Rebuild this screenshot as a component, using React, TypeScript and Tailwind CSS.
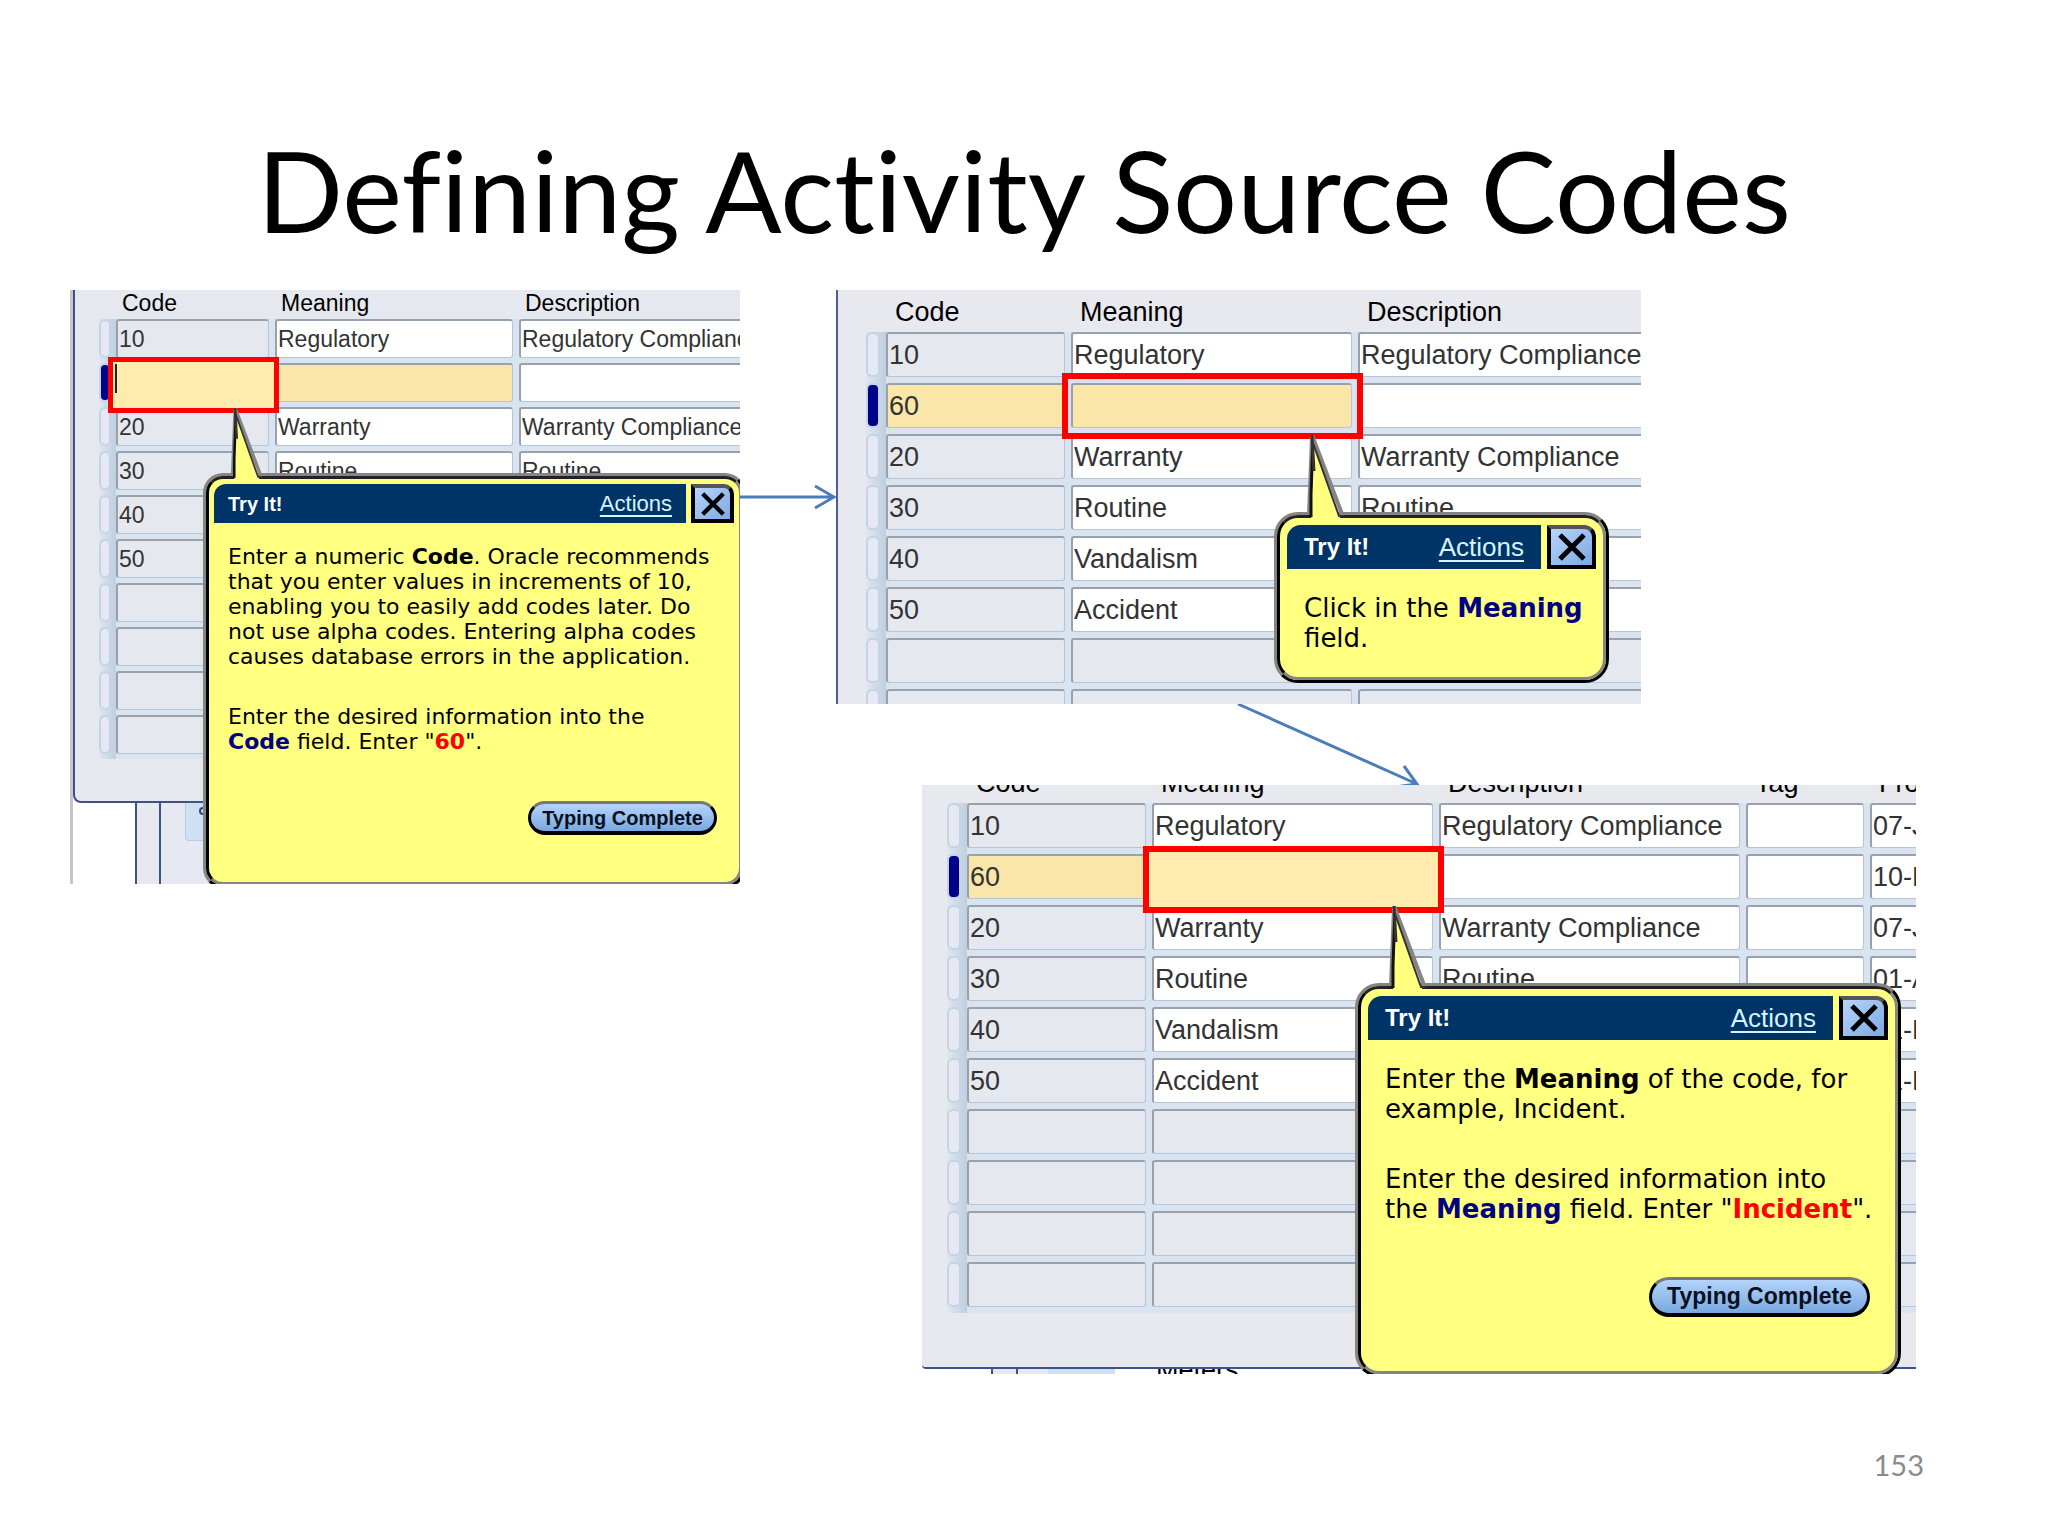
import type { ReactNode } from "react";
import clsx from "clsx";

type Size = "sm" | "lg";

interface Column {
  label: string;
  width: string;
}

interface Row {
  values: string[];
  current?: boolean;
}

interface FormGridProps {
  size: Size;
  columns: Column[];
  rows: Row[];
  className?: string;
}

const gridStyles = {
  sm: {
    marker: "w-[17px]",
    markerBox: "h-[39px] w-3",
    head: "h-[29px] pb-1 pl-[6px] text-[23px]",
    cell: "pb-[5px] pr-[6px]",
    input: "h-[39px] text-[23px]",
  },
  lg: {
    marker: "w-5",
    markerBox: "h-[45px] w-[14px]",
    head: "h-[42px] pb-1.5 pl-[9px] text-[27px]",
    cell: "pb-[6px] pr-[6px]",
    input: "h-[45px] text-[27px]",
  },
};

const smallColumns: Column[] = [
  { label: "Code", width: "w-[159px]" },
  { label: "Meaning", width: "w-[244px]" },
  { label: "Description", width: "w-[264px]" },
];

const largeColumns: Column[] = [
  { label: "Code", width: "w-[185px]" },
  { label: "Meaning", width: "w-[287px]" },
  { label: "Description", width: "w-[307px]" },
];

const wideColumns: Column[] = [
  ...largeColumns,
  { label: "Tag", width: "w-[124px]" },
  { label: "From", width: "w-[160px]" },
];

const codes = [
  ["10", "Regulatory", "Regulatory Compliance"],
  ["20", "Warranty", "Warranty Compliance"],
  ["30", "Routine", "Routine"],
  ["40", "Vandalism", "Vandalism"],
  ["50", "Accident", "Accident"],
];

function buildRows(newCode: string, total: number, dates: string[] = []): Row[] {
  const filled: Row[] = codes.map((values) => ({ values }));
  filled.splice(1, 0, { values: [newCode, "", ""], current: true });
  const rows = filled.map((row, i) =>
    dates.length > 0 ? { ...row, values: [...row.values, "", dates[i]] } : row
  );
  while (rows.length < total) rows.push({ values: [] });
  return rows;
}

const firstRows = buildRows("", 10);
const secondRows = buildRows("60", 8);
const thirdRows = buildRows("60", 10, ["07-J", "10-M", "07-J", "01-A", "01-M", "01-M"]);

function FormGrid({ size, columns, rows, className }: FormGridProps) {
  const s = gridStyles[size];

  function fieldColor(row: Row, col: number) {
    if (row.current && col < 2) return "bg-[#fae6a8]";
    if (row.values.length === 0 || col === 0) return "bg-[#e6e8ef]";
    return "bg-white";
  }

  return (
    <table className={clsx("w-0 table-fixed border-collapse", className)}>
      <thead>
        <tr>
          <th className={clsx("p-0", s.marker)} aria-label="Current record" />
          {columns.map((col) => (
            <th
              key={col.label}
              scope="col"
              className={clsx("whitespace-nowrap text-left align-bottom font-normal leading-none text-black", s.head, col.width)}
            >
              {col.label}
            </th>
          ))}
        </tr>
      </thead>
      <tbody>
        {rows.map((row, i) => (
          <tr key={i}>
            <td className="bg-gradient-to-r from-[#dfe7f1] to-[#bfcede] p-0 align-top">
              <div
                className={clsx(
                  "rounded-md border-2 border-[#c3d4e3]",
                  s.markerBox,
                  row.current ? "bg-[#00008b]" : "bg-[#e6e9f3]"
                )}
              />
            </td>
            {columns.map((col, c) => (
              <td key={col.label} className={clsx("bg-[#dae4f0] align-top", s.cell)}>
                <input
                  type="text"
                  aria-label={`${col.label}, row ${i + 1}`}
                  defaultValue={row.values[c] ?? ""}
                  className={clsx(
                    "block w-full rounded-[3px] border-l-2 border-t-2 border-b border-r border-b-[#b5c6d8] border-r-[#b5c6d8] border-l-[#98a2ae] border-t-[#98a2ae] p-0 pl-px text-[#333333] outline-none",
                    s.input,
                    fieldColor(row, c)
                  )}
                />
              </td>
            ))}
          </tr>
        ))}
      </tbody>
    </table>
  );
}

interface CalloutProps {
  size: Size;
  className: string;
  tail: string;
  action?: string;
  children: ReactNode;
}

const calloutStyles = {
  sm: {
    frame: "rounded-[20px]",
    inner: "rounded-[17px] p-[5px]",
    bar: "h-[39px] rounded-tl-[12px] px-[14px]",
    title: "text-[20px]",
    link: "text-[22px]",
    gap: "gap-[5px]",
    close: "h-[39px] w-[43px] rounded-tr-[10px]",
    icon: "h-6 w-6",
    body: "gap-[35px] px-[14px] pt-[21px] text-[22px] leading-[25px]",
    footer: "px-[17px] pb-[42px]",
    button: "h-[34px] w-[189px] text-[20px]",
  },
  lg: {
    frame: "rounded-[24px]",
    inner: "rounded-[21px] p-[7px]",
    bar: "h-[44px] rounded-tl-[14px] px-[17px]",
    title: "text-[24px]",
    link: "text-[26px]",
    gap: "gap-[6px]",
    close: "h-[44px] w-[49px] rounded-tr-[12px]",
    icon: "h-7 w-7",
    body: "gap-[40px] px-[17px] pt-[24px] text-[26px] leading-[30px]",
    footer: "px-[18px] pb-[47px]",
    button: "h-[40px] w-[221px] text-[23px]",
  },
};

function Callout({ size, className, tail, action, children }: CalloutProps) {
  const s = calloutStyles[size];
  return (
    <aside
      className={clsx(
        "absolute flex border-[3px] border-b-black border-l-[#858585] border-r-black border-t-[#858585] bg-[#ffff80]",
        s.frame,
        className
      )}
    >
      <div
        className={clsx(
          "flex w-full flex-col border-[3px] border-b-[#858585] border-l-black border-r-[#858585] border-t-[#222222]",
          s.inner
        )}
      >
        <header className={clsx("flex", s.gap)}>
          <div className={clsx("flex flex-1 items-center justify-between bg-[#003366] text-white", s.bar)}>
            <h2 className={clsx("font-bold", s.title)}>Try It!</h2>
            <a href="#actions" className={clsx("text-[#d4f4ff] underline decoration-2 underline-offset-4", s.link)}>
              Actions
            </a>
          </div>
          <button
            type="button"
            aria-label="Close"
            className={clsx(
              "flex items-center justify-center border-4 border-black border-t-[#555555] bg-gradient-to-br from-[#b8d4fb] to-[#7ba9e2]",
              s.close
            )}
          >
            <svg viewBox="0 0 28 28" className={clsx("shrink-0", s.icon)} fill="none" stroke="black" strokeWidth="5">
              <path d="M2 2 L26 26 M26 2 L2 26" />
            </svg>
          </button>
        </header>
        <div className={clsx("flex flex-1 flex-col whitespace-nowrap font-['DejaVu_Sans',sans-serif] text-black", s.body)}>
          {children}
        </div>
        {action && (
          <footer className={clsx("flex justify-end", s.footer)}>
            <button
              type="button"
              className={clsx(
                "rounded-full border-[3px] border-b-4 border-black border-t-[#777777] bg-gradient-to-b from-[#b4d4fb] to-[#78a8e0] font-bold leading-none text-[#0a1020]",
                s.button
              )}
            >
              {action}
            </button>
          </footer>
        )}
      </div>
      <svg viewBox="0 0 40 88" className={clsx("absolute", tail)} fill="none" aria-hidden="true">
        <path d="M7 4 L5 88 L36 88 L33 80 Z" fill="#ffff80" />
        <path d="M6 2 L3 80" stroke="#858585" strokeWidth="4" />
        <path d="M7 3 L5 60 L5 82" stroke="#111" strokeWidth="3" />
        <path d="M6 0 L36 79" stroke="#858585" strokeWidth="4" />
        <path d="M7 8 L33 81 L38 81" stroke="#333" strokeWidth="2" />
        <path d="M6 0 L8 36" stroke="#333" strokeWidth="3" />
      </svg>
    </aside>
  );
}

function Term({ children }: { children: ReactNode }) {
  return <b className="text-[#000080]">{children}</b>;
}

function Typed({ children }: { children: ReactNode }) {
  return <b className="text-[#ff0000]">{children}</b>;
}

export default function App() {
  return (
    <main className="min-h-screen overflow-hidden bg-white font-['Liberation_Sans',Arial,sans-serif]">
      <h1 className="pb-10 pt-32 text-center font-['Lato',sans-serif] text-[113px] leading-[122px] text-black [font-variant-ligatures:none]">
        Defining Activity Source Codes
      </h1>

      <div className="grid grid-cols-[minmax(0,670fr)_96px_minmax(0,1080fr)] items-start pl-[70px] pr-[132px]">
        {/* Step 1: enter the code */}
        <section className="relative h-[594px] overflow-hidden border-l-[3px] border-[#c6c6c6]">
          <div className="h-[513px] rounded-bl-lg border-b-2 border-l-2 border-[#3b5488] bg-[#e6e8ef]">
            <FormGrid size="sm" columns={smallColumns} rows={firstRows} className="ml-[24px]" />
          </div>
          <div className="ml-[62px] flex h-[81px] border-l-2 border-[#3b5488] bg-[#e8e8ef]">
            <div className="ml-[22px] flex-1 border-l-2 border-[#3b5488] bg-[#e6e9f1] pl-[24px]">
              <div className="flex h-[38px] w-16 rounded-b border border-t-0 border-[#b9cbe0] bg-[#cfe0f2] pl-[13px] pt-1">
                <span className="h-2 w-2 rounded-full border-2 border-[#2d4a80]" />
              </div>
            </div>
          </div>
          <div className="absolute left-[35px] top-[67px] h-[56px] w-[171px] border-[5px] border-[#ff0000] bg-[#ffebad]">
            <div className="ml-0.5 mt-0.5 h-[29px] w-0.5 bg-[#222222]" />
          </div>
          <Callout
            size="sm"
            className="-right-[5px] left-[130px] top-[183px] h-[415px]"
            tail="-top-[68px] left-6 h-[75px] w-[34px]"
            action="Typing Complete"
          >
            <p>
              Enter a numeric <b>Code</b>. Oracle recommends
              <br />
              that you enter values in increments of 10,
              <br />
              enabling you to easily add codes later. Do
              <br />
              not use alpha codes. Entering alpha codes
              <br />
              causes database errors in the application.
            </p>
            <p>
              Enter the desired information into the
              <br />
              <Term>Code</Term> field. Enter "<Typed>60</Typed>".
            </p>
          </Callout>
        </section>

        <svg viewBox="0 0 96 26" className="mt-[194px] h-[26px] w-full" fill="none" stroke="#4a7ebb" strokeWidth="3" aria-hidden="true">
          <path d="M0 13 H94 M75 2 L94 13 L75 24" />
        </svg>

        <div>
          {/* Step 2: move to the meaning field */}
          <section className="relative h-[414px] w-[805px] max-w-full overflow-hidden border-l-2 border-[#4a6090] bg-[#e8e8ef]">
            <FormGrid size="lg" columns={largeColumns} rows={secondRows} className="ml-7" />
            <div className="absolute left-[224px] top-[83px] h-[66px] w-[301px] border-[6px] border-[#ff0000]" />
            <Callout
              size="lg"
              className="left-[436px] top-[222px] h-[171px] w-[335px]"
              tail="-top-[80px] left-[29px] h-[88px] w-[40px]"
            >
              <p>
                Click in the <Term>Meaning</Term>
                <br />
                field.
              </p>
            </Callout>
          </section>

          <svg viewBox="0 0 182 81" className="ml-[402px] h-[81px] w-[182px] overflow-visible" fill="none" stroke="#4a7ebb" strokeWidth="3" aria-hidden="true">
            <path d="M0 0 L179 80 M166 62 L179 80 L157 83" />
          </svg>

          {/* Step 3: enter the meaning */}
          <section className="relative ml-[86px] h-[589px] overflow-hidden">
            <div className="h-[584px] overflow-hidden rounded-bl border-b-2 border-[#3b5488] bg-[#e8e8ef]">
              <FormGrid size="lg" columns={wideColumns} rows={thirdRows} className="-mt-6 ml-[25px]" />
            </div>
            <div className="flex h-[5px] overflow-hidden pl-[69px]">
              <div className="w-[27px] shrink-0 border-x-2 border-[#3b5488] bg-[#e8e8ef]" />
              <div className="w-[30px] shrink-0 bg-[#e4e9f2]" />
              <div className="w-[67px] shrink-0 bg-[#cfe0f0]" />
              <span className="-mt-3 ml-[41px] text-[27px] leading-none">Meters</span>
            </div>
            <div className="absolute left-[221px] top-[61px] h-[67px] w-[301px] border-[6px] border-[#ff0000] bg-[#ffebad]" />
            <Callout
              size="lg"
              className="left-[433px] top-[198px] h-[394px] w-[546px]"
              tail="-top-[80px] left-[30px] h-[88px] w-[40px]"
              action="Typing Complete"
            >
              <p>
                Enter the <b>Meaning</b> of the code, for
                <br />
                example, Incident.
              </p>
              <p>
                Enter the desired information into
                <br />
                the <Term>Meaning</Term> field. Enter "<Typed>Incident</Typed>".
              </p>
            </Callout>
          </section>
        </div>
      </div>

      <footer className="pr-[124px] pt-[73px] text-right font-['Lato',sans-serif] text-[29px] leading-9 text-[#8b8b8b]">
        153
      </footer>
    </main>
  );
}
